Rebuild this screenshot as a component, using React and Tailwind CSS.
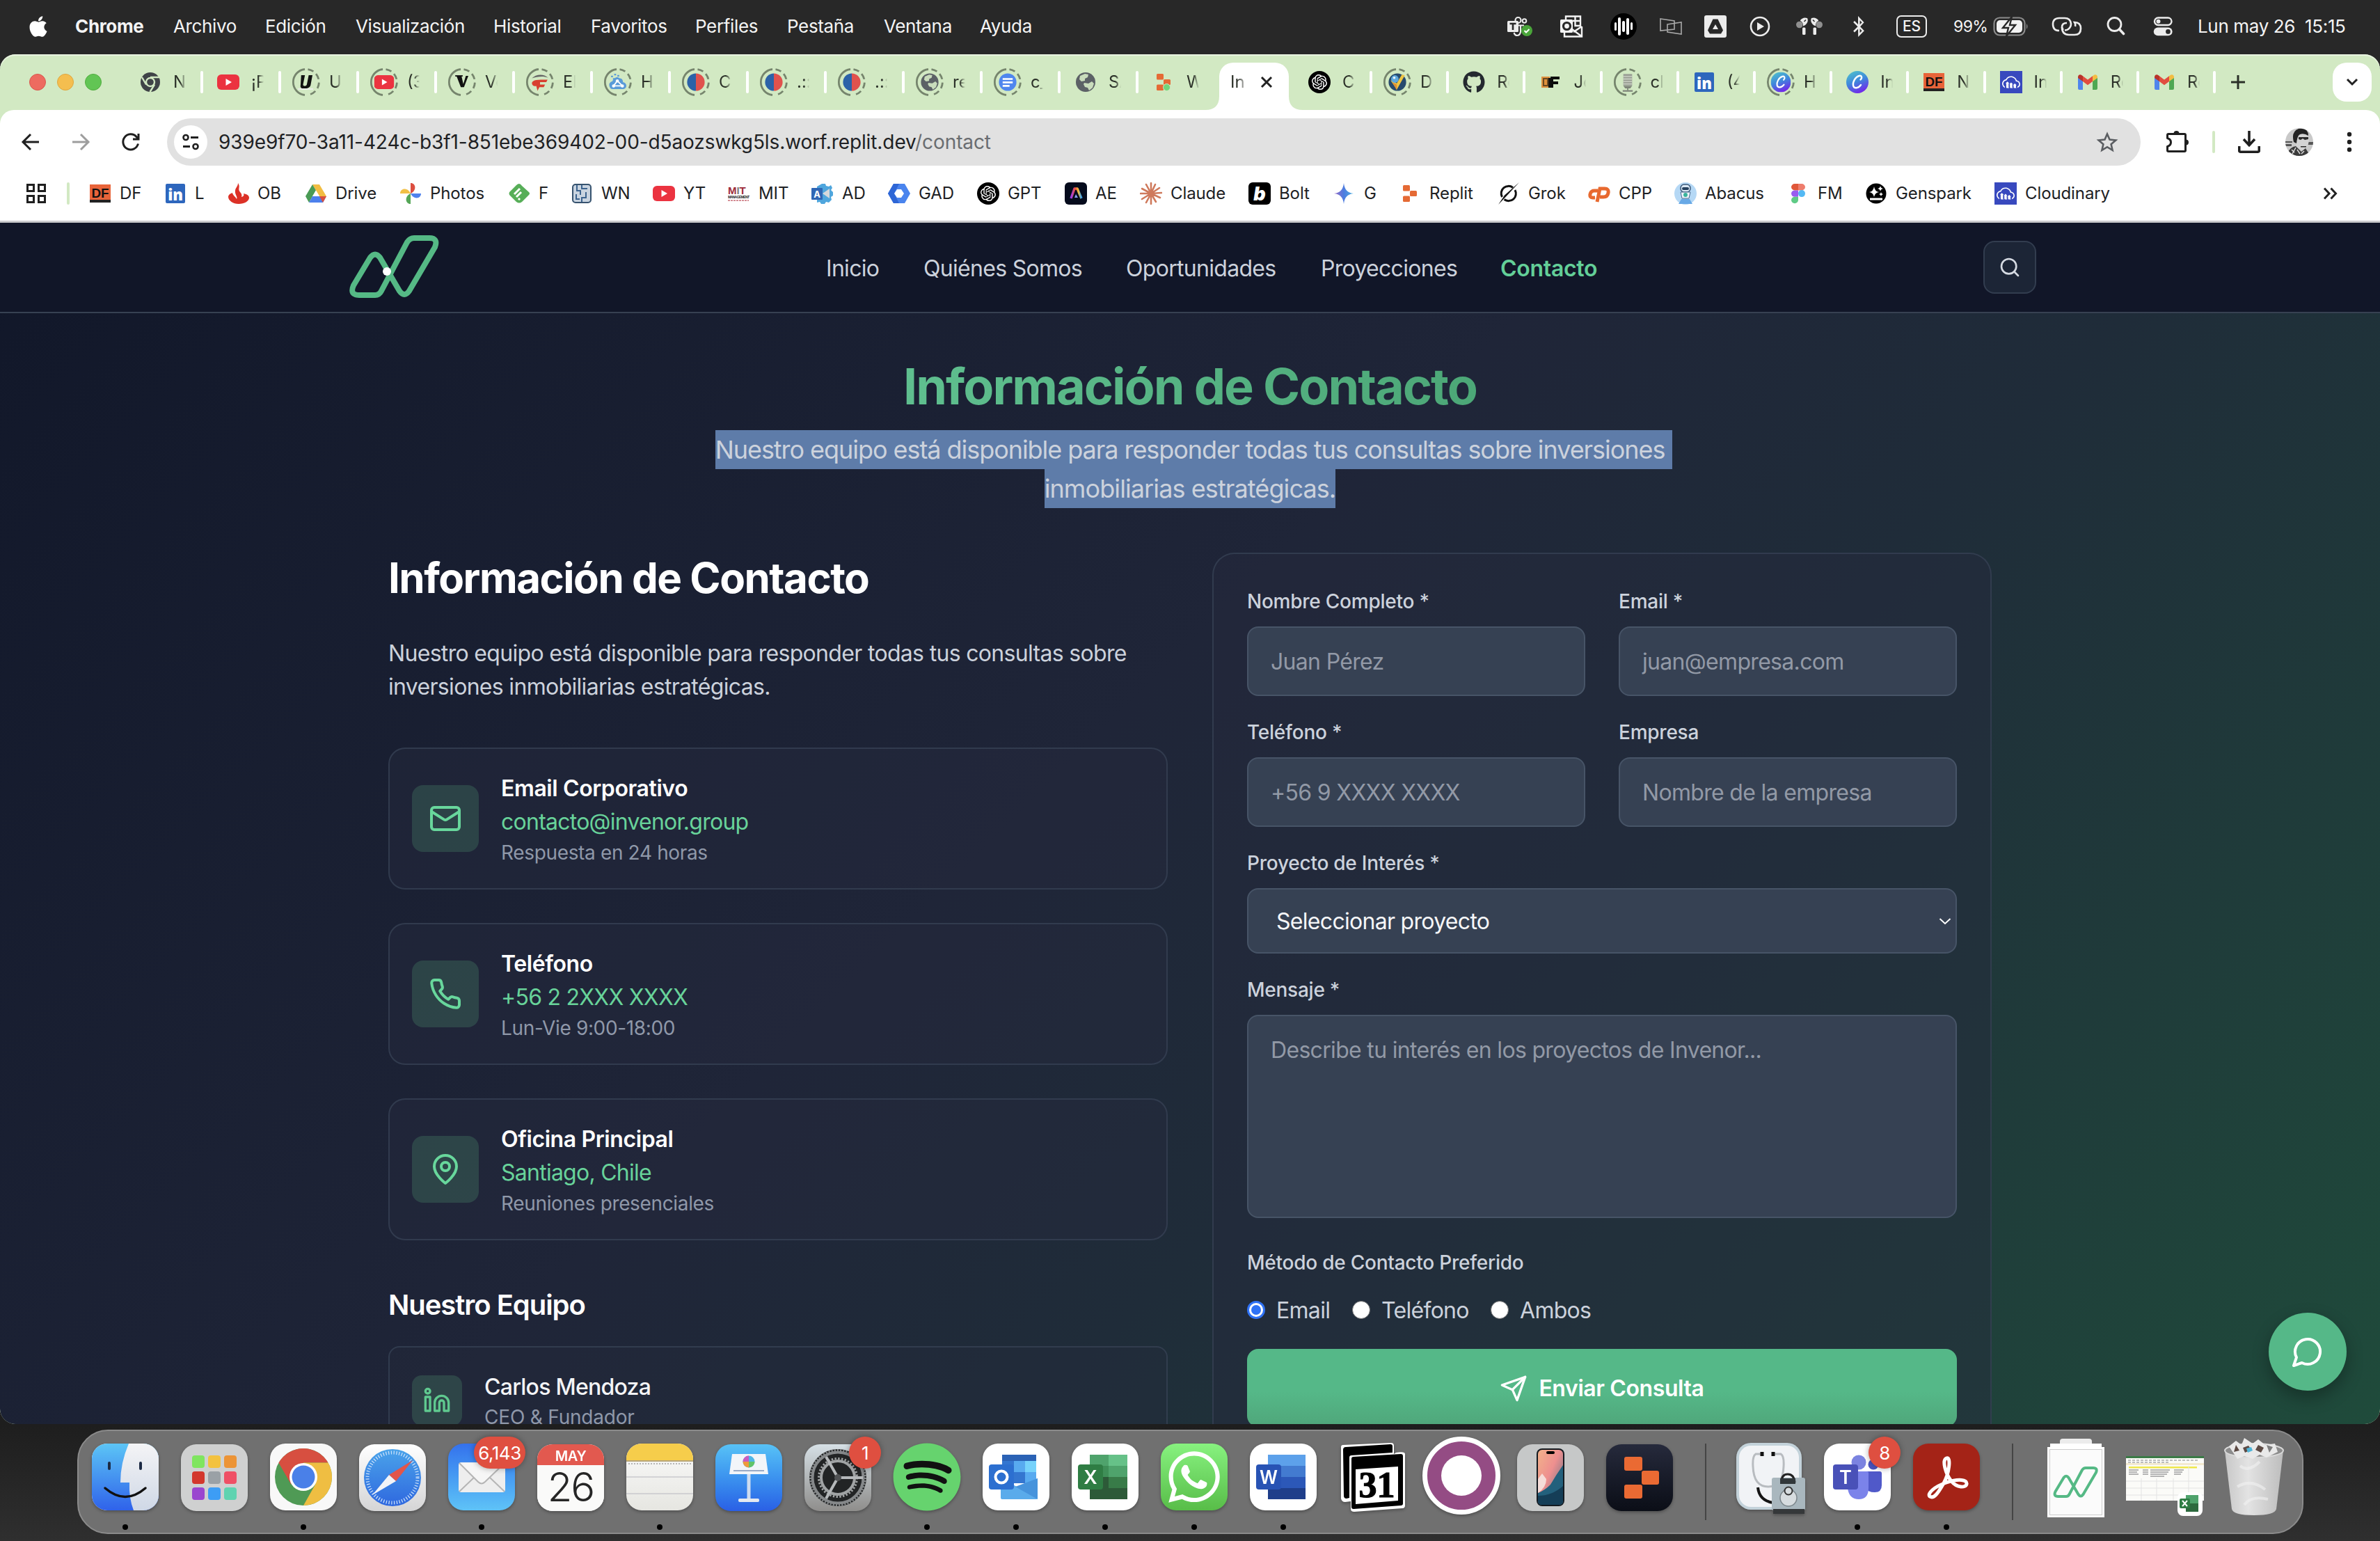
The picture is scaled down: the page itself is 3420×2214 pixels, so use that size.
import React from 'react';
import { FaApple, FaGithub, FaSpotify, FaWhatsapp, FaBluetoothB } from 'react-icons/fa';
import { SiOpenai, SiCloudinary } from 'react-icons/si';

/* ---------- shared drawings ---------- */

const Stroke = ({ className, width = 2, children }) => (
  <svg viewBox="0 0 24 24" fill="none" stroke="currentColor" strokeWidth={width} strokeLinecap="round" strokeLinejoin="round" className={className}>
    {children}
  </svg>
);

const Logo = ({ className, dot = true, width = 8 }) => (
  <svg viewBox="0 0 130 92" className={className} fill="none">
    <path
      d="M14 86H37Q43 86 46 80L83 10Q87 4 93 4H115Q128 4 123 17L86 80Q79 90 72 80L44 32Q37 23 30 32L6 72Q0 86 14 86Z"
      stroke="#55b985"
      strokeWidth={width}
      strokeLinejoin="round"
    />
    {dot && <circle cx="54" cy="52" r="6" fill="#fff" />}
  </svg>
);

const S = ({ children, className = 'size-8', vb = '0 0 32 32' }) => (
  <svg viewBox={vb} className={`${className} block shrink-0`}>
    {children}
  </svg>
);

const YT = () => (
  <S>
    <rect x="0" y="5" width="32" height="22" rx="6" fill="#eb3340" />
    <path d="M12.5 11l8.5 5-8.5 5z" fill="#fff" />
  </S>
);
const DF = () => (
  <S>
    <rect x="1" y="3" width="30" height="26" fill="#e8643a" />
    <rect x="1" y="25" width="30" height="4" fill="#222" />
    <text x="16" y="21.5" textAnchor="middle" fontFamily="Liberation Sans" fontSize="19" textLength="25" lengthAdjust="spacingAndGlyphs" fontWeight="bold" fill="#111">DF</text>
  </S>
);
const LI = () => (
  <S>
    <rect x="2" y="2" width="28" height="28" rx="2" fill="#2d66bd" />
    <text x="16" y="26" textAnchor="middle" fontFamily="Open Sans" fontWeight="800" fontSize="22" fill="#fff">in</text>
  </S>
);
const Gpt = () => (
  <div className="flex size-8 shrink-0 items-center justify-center rounded-full bg-black">
    <SiOpenai className="size-[22px] text-white" />
  </div>
);
const ChromeMono = () => (
  <S>
    <circle cx="16" cy="16" r="14" fill="#3f4347" />
    <path d="M16 9H29M10 19.5L4 9M22 19.5L15.5 30" stroke="#d2e9c3" strokeWidth="2.4" />
    <circle cx="16" cy="16" r="6" fill="#3f4347" stroke="#d2e9c3" strokeWidth="2.4" />
  </S>
);
const Globe = () => (
  <S>
    <circle cx="16" cy="16" r="14" fill="#5c6166" />
    <path d="M15 4l5 1-1 4-4 2v3l-5 1-3-3 1-5zM14 17l6 1 5-3 3 3-2 6-5 4-2-4-4-1-2-4z" fill="#c9dcbc" />
  </S>
);
const Flag = () => (
  <S>
    <path d="M16 2a14 14 0 0 0 0 28z" fill="#2c62a8" />
    <path d="M16 2a14 14 0 0 1 0 28z" fill="#e0524d" />
  </S>
);
const Replit = ({ green }) => (
  <S>
    <rect x="6" y="4" width="10" height="8.5" rx="1.5" fill="#e56a35" />
    <rect x="16" y="12" width="10" height="8" rx="1.5" fill="#e56a35" />
    <rect x="6" y="19.5" width="10" height="8.5" rx="1.5" fill="#e56a35" />
    {green && <circle cx="20.5" cy="23.5" r="5" fill="#72d67c" stroke="#d2e9c3" strokeWidth="1" />}
  </S>
);
const Canva = () => (
  <S>
    <defs>
      <linearGradient id="canva" x1="0.2" y1="0" x2="0.6" y2="1">
        <stop offset="0" stopColor="#4fc0cc" />
        <stop offset="0.5" stopColor="#3f86dc" />
        <stop offset="1" stopColor="#7324ea" />
      </linearGradient>
    </defs>
    <circle cx="16" cy="16" r="16" fill="url(#canva)" />
    <path d="M20.500 12.500c3-3 1.500-6.500-2-5.500-5.500 1.500-9.500 9-8.500 14 1 4.500 7 4.500 11-1" fill="none" stroke="#fff" strokeWidth="2.400" strokeLinecap="round" />
  </S>
);
const Cloudinary = () => (
  <div className="flex size-8 shrink-0 items-center justify-center bg-[#3849be]">
    <SiCloudinary className="size-[26px] text-white" />
  </div>
);
const Gmail = () => (
  <S>
    <path d="M2 9v16a2 2 0 0 0 2 2h5V14z" fill="#4f85ed" />
    <path d="M30 9v16a2 2 0 0 1-2 2h-5V14z" fill="#4fa853" />
    <path d="M2 9c0-4 3.500-4.500 6-2.500l1 .8V15l-7-5z" fill="#b8332a" />
    <path d="M30 9c0-4-3.500-4.500-6-2.500l-1 .8V15l7-5z" fill="#f2bd42" />
    <path d="M9 7.300l7 5.200 7-5.200V15l-7 5.300L9 15z" fill="#e14d3f" />
  </S>
);

const tabIcons = {
  chrome: <ChromeMono />,
  yt: <YT />,
  u: (
    <S>
      <path d="M8 5h6l-3 15c0 3 5 3 6 0l3-15h6l-3 16c-2 7-18 8-16 0z" fill="#111" />
      <path d="M3 27h24" stroke="#eee" strokeWidth="2" />
    </S>
  ),
  v: (
    <S>
      <path d="M7 6h8l3 13 4-13h4l-7 18h-5z" fill="#111" />
      <path d="M5 6h12" stroke="#111" strokeWidth="2" />
    </S>
  ),
  el: (
    <S>
      <path d="M3 10C9 3 22 2 29 9 22 6 11 7 3 10z" fill="#666" />
      <path d="M3 17c2-5 8-5 25-5l-2 4H16v4h8l-2 4h-7l-3 6-2-8c-4 1-7-1-7-5z" fill="#d8402f" />
    </S>
  ),
  h: (
    <S>
      <path d="M3 24c-3-6 2-9 4-9 2-6 8-9 12-5 4 0 5 4 5 6 7 1 7 10 1 11H7c-2 0-3-1-4-3z" fill="#5a9bd8" />
      <path d="M9 22l6-8 8 8z" fill="none" stroke="#fff" strokeWidth="2" />
      <circle cx="9" cy="22" r="2.500" fill="#fff" />
      <circle cx="23" cy="22" r="2.500" fill="#fff" />
      <circle cx="15" cy="14" r="2.500" fill="#fff" />
      <path d="M5 7h3M10 4h3M8 11h3M15 6h3" stroke="#5a9bd8" strokeWidth="2.500" />
    </S>
  ),
  flag: <Flag />,
  globe: <Globe />,
  doc: (
    <S>
      <circle cx="16" cy="16" r="14" fill="#4f86ee" />
      <path d="M8 11h16M8 16.500h16M8 22h11" stroke="#fff" strokeWidth="3" />
    </S>
  ),
  replit: <Replit green />,
  gpt: <Gpt />,
  d: (
    <S>
      <circle cx="16" cy="16" r="14" fill="#264a6e" />
      <path d="M5 13l10 15L28 5l-5-1-8 14z" fill="#eec544" />
      <path d="M8 16l7 13V20z" fill="#df8e36" />
      <circle cx="12" cy="11" r="6" fill="#5fa8dc" />
      <circle cx="11" cy="9" r="2" fill="#e8f4fc" />
    </S>
  ),
  github: <FaGithub className="size-8 text-[#24292f]" />,
  f: (
    <S>
      <rect x="3" y="8" width="12" height="16" fill="#e0913d" />
      <rect x="6" y="11" width="6" height="10" fill="#e0913d" stroke="#6b4a22" strokeWidth="2" />
      <path d="M18 24V10h11M18 17h9" fill="none" stroke="#0c0c0c" strokeWidth="4" />
      <rect x="13" y="10" width="3" height="14" fill="#111" />
    </S>
  ),
  mic: (
    <S>
      <rect x="9" y="3" width="14" height="19" fill="#9a9f95" />
      <path d="M9 7h14M9 11h14M9 15h14M9 19h14" stroke="#d2d8cc" strokeWidth="1.400" />
      <path d="M9 22h14l-3 4h-8zM15 26h2v3h-2z" fill="#7f857a" />
      <path d="M8 30h16" stroke="#7f857a" strokeWidth="2.400" />
    </S>
  ),
  li: <LI />,
  canva: <Canva />,
  df: <DF />,
  cloud: <Cloudinary />,
  gmail: <Gmail />,
};

const leftTabs = [
  ['chrome', 'N', 0], ['yt', '¡P', 0], ['u', 'U', 1], ['yt', '(3', 1], ['v', 'Vc', 1], ['el', 'El', 1], ['h', 'H', 1],
  ['flag', 'Cl', 1], ['flag', '.::', 1], ['flag', '.::', 1], ['globe', 're', 1], ['doc', 'c_', 1], ['globe', 'SA', 0], ['replit', 'W', 0],
];
const rightTabs = [
  ['gpt', 'Cl', 0], ['d', 'D', 1], ['github', 'Re', 0], ['f', 'Jo', 0], ['mic', 'cl', 1], ['li', '(4', 0], ['canva', 'H', 1],
  ['canva', 'In', 0], ['df', 'N', 0], ['cloud', 'In', 0], ['gmail', 'Re', 0], ['gmail', 'Re', 0],
];

const Tab = ({ icon, label, ring, first, wide }) => (
  <div className={`flex h-8 shrink-0 items-center ${wide ? 'w-[112px]' : 'w-[110.200px]'}`}>
    <span className={`-ml-[2px] h-8 w-1 shrink-0 rounded-sm ${first ? '' : 'bg-white'}`} />
    <span className="relative ml-[14px] flex size-11 shrink-0 items-center justify-center">
      {icon && <span className={ring ? 'scale-[0.9]' : ''}>{tabIcons[icon]}</span>}
      {ring ? (
        <svg viewBox="0 0 44 44" className="absolute inset-0 size-11" fill="none" stroke="#76856d" strokeWidth="2.800">
          <path d="M20 3.500A18.600 18.600 0 0 0 20 40.500" />
          <path d="M24.500 3.600A18.600 18.600 0 0 1 24.500 40.400" strokeDasharray="8.500 5" />
        </svg>
      ) : null}
    </span>
    <span className="ml-[11px] w-[18px] whitespace-nowrap text-[24px] leading-8 text-[#2b3028] [mask-image:linear-gradient(90deg,#000_55%,transparent)]">
      {label}
    </span>
  </div>
);

/* ---------- bookmarks ---------- */

const bookmarks = [
  ['DF', 'w-[108px]', <DF />],
  ['L', 'w-[90px]', <LI />],
  ['OB', 'w-[112px]', (
    <S>
      <path d="M2 21c0-3 3-5 6-6 0 3 4 5 6 9 2-3-3-7-2-12C12 8 16 6 16 1c4 6-1 8 3 13 2 2 3 4 2 7 5-1 3-5 3-5 5 1 8 3 8 6 0 5-7 9-15 9S2 26 2 21z" fill="#dc3127" />
    </S>
  )],
  ['Drive', 'w-[136px]', (
    <S>
      <path d="M11 3h10l10 17H21z" fill="#f2bd42" />
      <path d="M11 3l5 8.500L6 29 1 20z" fill="#4a9b55" />
      <path d="M11 20h20l-5 9H6z" fill="#4c80ec" />
      <path d="M21 20h10l-5 9z" fill="#d9503f" />
      <path d="M16 11.500L21 20H11z" fill="#fff" />
    </S>
  )],
  ['Photos', 'w-[156px]', (
    <S>
      <path d="M16 1c8 0 9 11 0 15z" fill="#dc4e40" />
      <path d="M31 16c0 8-11 9-15 0z" fill="#4f82ee" />
      <path d="M16 31c-8 0-9-11 0-15z" fill="#55a657" />
      <path d="M1 16c0-8 11-9 15 0z" fill="#f1c046" />
    </S>
  )],
  ['F', 'w-[90px]', (
    <S>
      <path d="M16 2q2 0 4 3l10 9q2 2 0 4L20 28q-4 3-8 0L2 18q-1-2 0-4L12 4q2-2 4-2z" fill="#57ae58" />
      <path d="M9 17l8-8M12 21l7-7M15 25l2-2" stroke="#fff" strokeWidth="3" />
    </S>
  )],
  ['WN', 'w-[118px]', (
    <S>
      <rect x="3" y="3" width="26" height="26" rx="4" fill="#c9d4e0" stroke="#37536f" strokeWidth="2" />
      <path d="M9 4v8h5v6M16 4v5h8M22 14v8h-6v6M8 17v7h5" fill="none" stroke="#3d648f" strokeWidth="2" />
    </S>
  )],
  ['YT', 'w-[108px]', <YT />],
  ['MIT', 'w-[120px]', (
    <S>
      <text x="0" y="17" fontFamily="Liberation Sans" fontWeight="bold" fontSize="15" fill="#9d2c3a">M<tspan fill="#7d7d7d">I</tspan>T</text>
      <text x="0" y="23" fontFamily="Liberation Sans" fontWeight="bold" fontSize="5" textLength="31" fill="#222">MANAGEMENT</text>
      <path d="M0 26h30" stroke="#c76b74" strokeWidth="1.500" strokeDasharray="3 1" />
    </S>
  )],
  ['AD', 'w-[110px]', (
    <S>
      <path d="M15 2h5l1 3 4 1 3-2 2 4-2 3 3 3v5l-3 2 1 4-4 4-4-1-2 3h-5l-2-3-4 1V6z" fill="#4fa6dd" />
      <path d="M16 16l10-7v14z" fill="#d5d8dc" />
      <rect x="0" y="8" width="16" height="17" rx="1" fill="#2f66b5" />
      <text x="8" y="21.500" textAnchor="middle" fontFamily="Inter" fontWeight="bold" fontSize="13" fill="#fff">A</text>
    </S>
  )],
  ['GAD', 'w-[128px]', (
    <S>
      <path d="M8 2h16l8 14-8 14H8L0 16z" fill="#4a84ee" />
      <path d="M8 2h8L9 16l7 14H8L0 16z" fill="#2e66d6" />
      <path d="M13 10h6l4 6-4 6h-6l-4-6z" fill="#fff" />
    </S>
  )],
  ['GPT', 'w-[126px]', <Gpt />],
  ['AE', 'w-[108px]', (
    <S>
      <defs>
        <linearGradient id="ae" x1="0" x2="1"><stop offset="0" stopColor="#9a3df0" /><stop offset=".4" stopColor="#f0503c" /><stop offset=".7" stopColor="#f2c23a" /><stop offset="1" stopColor="#3aa0f0" /></linearGradient>
      </defs>
      <rect width="32" height="32" rx="6" fill="#050b1c" />
      <path d="M9 23l5-14h4l6 14" fill="none" stroke="url(#ae)" strokeWidth="3.500" strokeLinejoin="round" />
      <path d="M14 22l2-5 3 5z" fill="#8aa0f5" />
    </S>
  )],
  ['Claude', 'w-[156px]', (
    <S>
      <path d="M16 16L16 1M16 16L22 3M16 16L28 8M16 16L31 15M16 16L29 22M16 16L23 28M16 16L16 31M16 16L9 29M16 16L3 24M16 16L1 16M16 16L3 9M16 16L9 3" stroke="#cf7a5c" strokeWidth="2.600" strokeLinecap="round" />
    </S>
  )],
  ['Bolt', 'w-[122px]', (
    <S>
      <rect width="32" height="32" rx="6" fill="#000" />
      <text x="16" y="26" textAnchor="middle" fontFamily="Inter" fontStyle="italic" fontWeight="900" fontSize="27" fill="#fff">b</text>
    </S>
  )],
  ['G', 'w-[94px]', (
    <S>
      <defs>
        <linearGradient id="gem" x1="0" x2="1"><stop offset="0" stopColor="#9a6cc4" /><stop offset=".5" stopColor="#4d7ce0" /><stop offset="1" stopColor="#4fb0e0" /></linearGradient>
      </defs>
      <path d="M15 1c1 9 5 14 14 15-9 1-13 6-14 15-1-9-5-14-14-15 9-1 13-6 14-15z" fill="url(#gem)" />
    </S>
  )],
  ['Replit', 'w-[142px]', <Replit />],
  ['Grok', 'w-[130px]', (
    <S>
      <path d="M22 7.500A10.500 10.500 0 0 0 6.500 21M9.500 24.500A10.500 10.500 0 0 0 25 11" fill="none" stroke="#111" strokeWidth="3" />
      <path d="M31 0L13 19.500 1 32l9-13.500z" fill="#111" />
    </S>
  )],
  ['CPP', 'w-[124px]', (
    <S>
      <path d="M14 12H9q-5 0-6 5t4 5h3" fill="none" stroke="#e8692f" strokeWidth="5" />
      <path d="M13 28l4-19h7q6 0 5 6t-7 6h-5" fill="none" stroke="#e8692f" strokeWidth="5" />
    </S>
  )],
  ['Abacus', 'w-[162px]', (
    <S>
      <circle cx="16" cy="16" r="16" fill="#b5d8f5" />
      <rect x="9" y="3" width="14" height="11" rx="5" fill="#dbe8f5" stroke="#3c5878" strokeWidth="1.500" />
      <rect x="11" y="7" width="10" height="4" rx="2" fill="#27415f" />
      <path d="M9 14h14l-2 9H11z" fill="#eef4fa" stroke="#4a6a8e" />
      <circle cx="16" cy="18" r="3" fill="#39b39b" />
      <path d="M6 31l4-7h12l4 7z" fill="#68a9e6" />
    </S>
  )],
  ['FM', 'w-[112px]', (
    <S>
      <path d="M16 2h-5a5 4.700 0 0 0 0 9.400h5z" fill="#e0573a" />
      <path d="M16 2h5a5 4.700 0 0 1 0 9.400h-5z" fill="#ee7d6d" />
      <path d="M16 11.400h-5a5 4.700 0 0 0 0 9.400h5z" fill="#9a5cf0" />
      <circle cx="21" cy="16.100" r="5" fill="#54b9f4" />
      <path d="M16 20.800h-5a5 4.700 0 1 0 5 4.700z" fill="#5fcb86" />
    </S>
  )],
  ['Genspark', 'w-[186px]', (
    <S>
      <circle cx="16" cy="16" r="14.500" fill="#000" />
      <path d="M13 6q1 7 7 8-6 1-7 7-1-6-7-7 6-1 7-8zM22 5q.5 3.500 4 4-3.500.5-4 4-.5-3.500-4-4 3.500-.5 4-4zM23 14q.4 2.600 3 3-2.600.4-3 3-.4-2.600-3-3 2.600-.4 3-3z" fill="#fff" />
      <path d="M7 24h18" stroke="#fff" strokeWidth="3" />
    </S>
  )],
  ['Cloudinary', 'w-[190px]', <Cloudinary />],
];

/* ---------- menu bar ---------- */

const MenuBar = () => (
  <div className="flex h-[78px] shrink-0 items-center bg-[#282828] pb-[3px] text-[26px] leading-8 text-[#f4f4f4]">
    <FaApple className="ml-[38px] size-[34px] shrink-0 text-white" />
    <div className="ml-[36px] flex items-center whitespace-nowrap tracking-[-0.35px]">
      <span className="w-[141px] font-bold">Chrome</span>
      <span className="w-[132px]">Archivo</span>
      <span className="w-[130px]">Edición</span>
      <span className="w-[198px]">Visualización</span>
      <span className="w-[140px]">Historial</span>
      <span className="w-[150px]">Favoritos</span>
      <span className="w-[132px]">Perfiles</span>
      <span className="w-[139px]">Pestaña</span>
      <span className="w-[138px]">Ventana</span>
      <span>Ayuda</span>
    </div>
    <div className="ml-auto flex items-center pr-[34px]">
      <S className="h-9 w-9" vb="0 0 36 36">
        <circle cx="15.500" cy="9" r="4" fill="none" stroke="#ececec" strokeWidth="2.200" />
        <circle cx="24.500" cy="10" r="2.800" fill="none" stroke="#ececec" strokeWidth="2" />
        <path d="M16 16.500h8M19 17v9q-1 5-5 5-3 0-4.500-4" fill="none" stroke="#ececec" strokeWidth="2.200" />
        <rect x="0" y="10" width="16" height="16" rx="1.500" fill="#ececec" />
        <path d="M3.500 14h9M8 13.500v9.500" stroke="#282828" strokeWidth="2.600" />
        <circle cx="28" cy="24" r="8" fill="#4aa53a" />
        <path d="M24.500 24l2.500 2.500 4.500-4.500" fill="none" stroke="#fff" strokeWidth="2" />
      </S>
      <S className="ml-[39px] h-9 w-9" vb="0 0 36 36">
        <path d="M9 8V3.500h21v13M7 27v5.500h25V18M19 10h11M22.500 4v13H31M18 22l13.500 10M32 18l-12 8" fill="none" stroke="#f4f4f4" strokeWidth="2.400" />
        <rect x="1" y="8" width="18" height="19" rx="1.500" fill="#f4f4f4" />
        <circle cx="10.500" cy="17.500" r="5" fill="none" stroke="#282828" strokeWidth="3.200" />
      </S>
      <div className="ml-[37px] flex size-[38px] items-center justify-center gap-[2.500px] rounded-full bg-black">
        <i className="h-[12px] w-[3.400px] rounded bg-white" />
        <i className="h-[26px] w-[3.400px] rounded bg-white" />
        <i className="h-[16px] w-[3.400px] rounded bg-white" />
        <i className="h-[24px] w-[3.400px] rounded bg-white" />
        <i className="h-[11px] w-[3.400px] rounded bg-white" />
      </div>
      <S className="ml-[33px] size-8">
        <path d="M1 5l20 3v12L1 22zM11 13l20-3v17l-20-3z" fill="none" stroke="#a9a9a9" strokeWidth="1.600" />
      </S>
      <S className="ml-[32px] size-8">
        <rect width="32" height="32" rx="3" fill="#ececec" />
        <path d="M12.500 5.500h7L27 21.500l-3 5H8l-3-5z" fill="#282828" />
        <path d="M16 13l4 7h-8z" fill="#ececec" />
      </S>
      <S className="ml-[32px] size-8">
        <circle cx="16" cy="16" r="13" fill="none" stroke="#ececec" strokeWidth="2.600" />
        <path d="M12 10l10 6-10 6z" fill="#ececec" />
      </S>
      <S className="ml-[36px] h-8 w-[38px]" vb="0 0 38 32">
        <circle cx="4.800" cy="13.500" r="4.800" fill="#8f8f8f" />
        <circle cx="33.200" cy="13.500" r="4.800" fill="#8f8f8f" />
        <path d="M6 7Q10 2 16 4q2 4-1 8-2 3-5 3.500V13Q9 9 6 8zM32 7q-4-5-10-3-2 4 1 8 2 3 5 3.500V13q1-4 4-5z" fill="#ececec" />
        <rect x="9" y="17.500" width="4.500" height="10.500" rx="1.500" fill="#ececec" />
        <rect x="24.500" y="17.500" width="4.500" height="10.500" rx="1.500" fill="#ececec" />
        <path d="M11.500 9l2.500-2.500M26.500 9L24 6.500" stroke="#282828" strokeWidth="1.600" />
      </S>
      <FaBluetoothB className="ml-[37px] size-[30px] text-[#ececec]" />
      <span className="ml-[39px] flex h-8 w-11 items-center justify-center rounded-[7px] border-2 border-[#ececec] text-[21px] font-medium">ES</span>
      <span className="ml-[38px] w-[50px] text-[23px] tracking-[-0.6px]">99%</span>
      <S className="ml-[7px] h-8 w-[52px]" vb="0 0 52 32">
        <rect x="1.500" y="3.500" width="44" height="25" rx="8" fill="none" stroke="#8a8a8a" strokeWidth="2.200" />
        <rect x="5" y="7" width="37" height="18" rx="5" fill="#f2f2f2" />
        <path d="M27 2L14 18h8l-3 12 13-16h-8z" fill="#f2f2f2" stroke="#282828" strokeWidth="2.400" />
        <path d="M48 12q3 4 0 8z" fill="#8a8a8a" />
      </S>
      <S className="ml-[32px] h-8 w-[44px]" vb="0 0 44 32">
        <path d="M17 21q-2-2-2-4 0-6 7-6M11 22Q2 22 2 13T11 4h8q8 0 9 8 0 5-4 8-2 1.500-5 1.500" fill="none" stroke="#ececec" strokeWidth="2.600" />
        <path d="M15 17q0 11 10 11h8q9 0 9-9t-9-9q2 3 1 6" fill="none" stroke="#ececec" strokeWidth="2.600" />
      </S>
      <S className="ml-[34px] h-8 w-[30px]" vb="0 0 30 32">
        <circle cx="12.500" cy="13" r="9.500" fill="none" stroke="#ececec" strokeWidth="2.800" />
        <path d="M19.500 20l6 6.500" stroke="#ececec" strokeWidth="3.600" strokeLinecap="round" />
      </S>
      <S className="ml-[37px] h-8 w-[30px]" vb="0 0 30 32">
        <rect x="3" y="3.500" width="24.500" height="10.500" rx="5.250" fill="none" stroke="#ececec" strokeWidth="2.400" />
        <circle cx="8.500" cy="8.700" r="3" fill="#ececec" />
        <rect x="1.800" y="17.500" width="26.800" height="11.800" rx="5.900" fill="#ececec" />
        <circle cx="22.500" cy="23.400" r="3.400" fill="#282828" />
      </S>
      <span className="ml-[35px] w-[228px] whitespace-pre tracking-[-0.35px]">Lun may 26  15:15</span>
    </div>
  </div>
);

/* ---------- browser chrome ---------- */

const TabStrip = () => (
  <div className="flex h-[80px] shrink-0 items-center">
    <span className="ml-[42px] size-6 shrink-0 rounded-full border border-[#d9574d] bg-[#ed6b60]" />
    <span className="ml-4 size-6 shrink-0 rounded-full border border-[#dfa63e] bg-[#f4be4f]" />
    <span className="ml-4 size-6 shrink-0 rounded-full border border-[#52ae40] bg-[#62c554]" />
    <div className="ml-8 flex items-center">
      {leftTabs.map(([icon, label, ring], i) => (
        <Tab key={i} icon={icon} label={label} ring={ring} first={i === 0} wide />
      ))}
    </div>
    <div className="flex w-[112px] shrink-0 items-end self-end">
      <S className="-ml-[14px] size-5" vb="0 0 20 20">
        <path d="M20 0v20H0Q20 20 20 0z" fill="#fff" />
      </S>
      <div className="flex h-[68px] w-[100px] shrink-0 items-center rounded-t-[20px] bg-white pb-3">
        <span className="ml-4 w-6 text-[24px] leading-8 text-[#2b3028] [mask-image:linear-gradient(90deg,#000_40%,rgba(0,0,0,0.4)_80%)]">In</span>
        <S className="ml-[18px] size-5" vb="0 0 20 20">
          <path d="M3 3l14 14M17 3L3 17" stroke="#222" strokeWidth="3" />
        </S>
      </div>
      <S className="size-5" vb="0 0 20 20">
        <path d="M0 0v20h20Q0 20 0 0z" fill="#fff" />
      </S>
    </div>
    <div className="flex items-center">
      {rightTabs.map(([icon, label, ring], i) => (
        <Tab key={i} icon={icon} label={label} ring={ring} first={i === 0} wide={i < 1} />
      ))}
      <span className="-ml-[2px] h-8 w-1 rounded-sm bg-white" />
    </div>
    <S className="ml-[22px] size-5" vb="0 0 20 20">
      <path d="M10 0v20M0 10h20" stroke="#2b3028" strokeWidth="3" />
    </S>
    <div className="mr-3 ml-auto flex size-14 items-center justify-center rounded-[20px] bg-white">
      <S className="h-3 w-[18px]" vb="0 0 18 12">
        <path d="M2 2l7 7 7-7" fill="none" stroke="#222" strokeWidth="3" />
      </S>
    </div>
  </div>
);

const Toolbar = () => (
  <div className="flex h-[92px] shrink-0 items-center">
    <S className="ml-[30px] size-7" vb="0 0 28 28">
      <path d="M26 14H4M14 3L3 14l11 11" fill="none" stroke="#1f1f1f" strokeWidth="3" />
    </S>
    <S className="ml-[44px] size-7" vb="0 0 28 28">
      <path d="M2 14h22M14 3l11 11-11 11" fill="none" stroke="#9d9d9d" strokeWidth="3" />
    </S>
    <S className="ml-[44px] size-7" vb="0 0 28 28">
      <path d="M24.500 16.500A11 11 0 1 1 22 6.500L25 9.500M25 2v8h-8" fill="none" stroke="#1f1f1f" strokeWidth="3" />
    </S>
    <div className="ml-[38px] flex h-[68px] w-[2836px] shrink-0 items-center rounded-full bg-[#e1e1e1]">
      <div className="ml-[10px] flex size-12 items-center justify-center rounded-full bg-white">
        <S className="size-7" vb="0 0 28 28">
          <circle cx="7" cy="7.500" r="3.500" fill="none" stroke="#1f1f1f" strokeWidth="2.600" />
          <path d="M14 7.500h11M3 20.500h10" stroke="#1f1f1f" strokeWidth="3" />
          <circle cx="21" cy="20.500" r="3.500" fill="none" stroke="#1f1f1f" strokeWidth="2.600" />
        </S>
      </div>
      <div className="ml-4 text-[28px] leading-9 tracking-[-0.1px] whitespace-nowrap text-[#202124]">
        939e9f70-3a11-424c-b3f1-851ebe369402-00-d5aozswkg5ls.worf.replit.dev<span className="text-[#6a6d71]">/contact</span>
      </div>
      <S className="mr-[32px] ml-auto size-8">
        <path d="M16 4.500l3.500 8.100 8.800.8-6.700 5.800 2 8.600L16 23.200l-7.600 4.600 2-8.600-6.700-5.800 8.800-.8z" fill="none" stroke="#5b5e62" strokeWidth="2.600" />
      </S>
    </div>
    <S className="ml-[36px] h-8 w-[34px]" vb="0 0 34 32">
      <path d="M4 4.500h23q1.500 0 1.500 1.500v22q0 1.500-1.500 1.500H4q-1.500 0-1.500-1.500v-5.500q5-1.500 5-6t-5-6V6Q2.500 4.500 4 4.500z" fill="none" stroke="#1f1f1f" strokeWidth="3" strokeLinejoin="round" />
      <path d="M11.500 4a4 4 0 0 1 8 0zM29 12.500a4 4 0 0 1 0 8z" fill="#1f1f1f" />
    </S>
    <span className="ml-[33px] h-8 w-1 rounded bg-[#d2e9c3]" />
    <S className="ml-[33px] size-8">
      <path d="M16 0v20M8 12l8 8.500 8-8.500M1.700 22v6.500q0 1.700 1.700 1.700h25.200q1.700 0 1.700-1.700V22" fill="none" stroke="#1f1f1f" strokeWidth="3.600" />
    </S>
    <S className="ml-[36px] size-10" vb="0 0 40 40">
      <defs><clipPath id="ava"><circle cx="20" cy="20" r="20" /></clipPath></defs>
      <g clipPath="url(#ava)">
        <rect width="40" height="40" fill="#c9c9c9" />
        <path d="M0 19h10v2H0zM0 23h9v3H0zM32 20h8v4h-8z" fill="#555" />
        <path d="M14 12Q18 4 28 5q7 3 6 13l-2 9-7 5-9-4z" fill="#d3d3d3" />
        <path d="M12 20Q8 5 19 1q14-2 14 10-6-4-12-2-4 2-5 13z" fill="#232323" />
        <path d="M19 13l14 0v3l-5 1-3-2-3 2-3-1zM22 26h8v1.600h-8z" fill="#2a2a2a" />
        <path d="M3 36q4-9 12-10l8 8 6-5 5 8-8 6H8z" fill="#3b3b3b" />
        <path d="M9 31l4 4M15 28l-5 9M17 31l4 6M27 33l-4 4" stroke="#ddd" strokeWidth="1.500" />
      </g>
    </S>
    <S className="ml-[46px] h-8 w-3" vb="0 0 12 32">
      <circle cx="6" cy="5" r="3.200" fill="#1f1f1f" /><circle cx="6" cy="16" r="3.200" fill="#1f1f1f" /><circle cx="6" cy="27" r="3.200" fill="#1f1f1f" />
    </S>
  </div>
);

const Bookmarks = () => (
  <div className="flex h-[56px] shrink-0 items-center">
    <S className="ml-[38px] size-7" vb="0 0 28 28">
      <path d="M1.500 1.500h9v9h-9zM17.500 1.500h9v9h-9zM1.500 17.500h9v9h-9zM17.500 17.500h9v9h-9z" fill="none" stroke="#1f1f1f" strokeWidth="3" />
    </S>
    <span className="mr-7 ml-[30px] h-8 w-1 shrink-0 rounded bg-[#d2e9c3]" />
    {bookmarks.map(([label, w, icon]) => (
      <div key={label} className={`flex shrink-0 items-center gap-3 text-[24px] leading-8 tracking-[-0.1px] whitespace-nowrap text-[#202124] ${w}`}>
        {icon}
        <span>{label}</span>
      </div>
    ))}
    <S className="mr-[61px] ml-auto h-[18px] w-[22px]" vb="0 0 22 18">
      <path d="M3 1.500l7 7.500-7 7.500M12.500 1.500l7 7.500-7 7.500" fill="none" stroke="#222" strokeWidth="3" />
    </S>
  </div>
);

/* ---------- web page ---------- */

const InfoCard = ({ icon, title, value, note }) => (
  <div className="flex h-[204px] items-center gap-8 rounded-[24px] border-2 border-[#364154]/80 bg-[#262b3d]/45 p-8">
    <div className="flex size-24 items-center justify-center rounded-[16px] bg-[#68d391]/18 text-[#68d79c]">{icon}</div>
    <div className="pt-[2px]">
      <div className="text-[32px] leading-[48px] font-semibold tracking-[-0.4px] text-white">{title}</div>
      <div className="text-[32px] leading-[48px] tracking-[-0.75px] text-[#68d39a]">{value}</div>
      <div className="text-[28px] leading-[40px] tracking-[-0.35px] text-[#8f98a9]">{note}</div>
    </div>
  </div>
);

const Label = ({ children }) => <div className="text-[28px] leading-[40px] font-medium tracking-[-0.24px] text-[#ccd2dc]">{children}</div>;

const Field = ({ label, placeholder }) => (
  <div className="flex flex-1 flex-col gap-4">
    <Label>{label}</Label>
    <div className="flex h-[100px] items-center rounded-[16px] border-2 border-[#475467] bg-[#364153] px-8 pt-[2px] text-[32px] leading-[48px] tracking-[-0.68px] text-[#9299a6]">{placeholder}</div>
  </div>
);

const Radio = ({ label, on, w }) => (
  <div className={`flex items-center ${w}`}>
    <span className={`size-[26px] shrink-0 rounded-full bg-white ${on ? 'border-[3px] border-[#2f72f5] p-[3px]' : 'border border-[#767676]'}`}>
      {on && <span className="block size-full rounded-full bg-[#2f72f5]" />}
    </span>
    <span className="ml-4 pt-[1px] text-[32px] leading-[47px] tracking-[-0.7px] text-[#ccd2dc]">{label}</span>
  </div>
);

const Page = () => (
  <div className="relative flex min-h-0 flex-1 flex-col overflow-hidden rounded-b-[20px] bg-[linear-gradient(135deg,#111729_0%,#1f2538_45%,#1f2c39_62%,#1f4b3b_100%)]">
    <div className="flex h-[130px] shrink-0 items-center border-b-2 border-[#374152] bg-[#111628]">
      <Logo className="ml-[502px] h-[92px] w-[130px] shrink-0" />
      <nav className="ml-[555px] flex items-center pt-[3px] text-[32px] leading-[48px] tracking-[-0.7px] whitespace-nowrap text-[#ccd2dc]">
        <span className="w-[140px]">Inicio</span>
        <span className="w-[291px]">Quiénes Somos</span>
        <span className="w-[280px]">Oportunidades</span>
        <span className="w-[258px]">Proyecciones</span>
        <span className="font-semibold tracking-[-0.3px] text-[#63cf98]">Contacto</span>
      </nav>
      <div className="mr-[494px] ml-auto flex size-[76px] items-center justify-center rounded-[16px] border-2 border-[#323d4f] bg-[#1c2536] text-[#d5dae2]">
        <Stroke className="size-8"><circle cx="11" cy="11" r="8" /><path d="m21 21-4.300-4.300" /></Stroke>
      </div>
    </div>

    <div className="flex shrink-0 flex-col items-center pt-[65px]">
      <h1 className="bg-gradient-to-r from-[#5fbf8f] to-[#4ca777] bg-clip-text text-[72px] leading-[80px] font-bold tracking-[-2px] whitespace-nowrap text-transparent">
        Información de Contacto
      </h1>
      <div className="mt-[23px] flex flex-col items-center text-[36px] leading-[56px] tracking-[-1.050px] whitespace-nowrap text-[#ccd2dc]">
        <span className="-mr-[11px] bg-[#5e7ca9] pr-[11px]">Nuestro equipo está disponible para responder todas tus consultas sobre inversiones</span>
        <span className="bg-[#5e7ca9] tracking-[-0.9px]">inmobiliarias estratégicas.</span>
      </div>
    </div>

    <div className="mx-auto mt-16 flex w-[2304px] shrink-0 items-start gap-16">
      <div className="w-[1120px]">
        <h2 className="text-[60px] leading-[72px] font-bold tracking-[-1.500px] whitespace-nowrap text-white">Información de Contacto</h2>
        <p className="mt-[49px] text-[32px] leading-[48px] tracking-[-0.68px] whitespace-nowrap text-[#ccd2dc]">
          Nuestro equipo está disponible para responder todas tus consultas sobre
          <br />
          inversiones inmobiliarias estratégicas.
        </p>
        <div className="mt-[63px] flex flex-col gap-12">
          <InfoCard
            icon={<Stroke className="size-12"><rect width="20" height="16" x="2" y="4" rx="2" /><path d="m22 7-8.970 5.700a1.940 1.940 0 0 1-2.060 0L2 7" /></Stroke>}
            title="Email Corporativo" value="contacto@invenor.group" note="Respuesta en 24 horas"
          />
          <InfoCard
            icon={<Stroke className="size-12"><path d="M22 16.920v3a2 2 0 0 1-2.180 2 19.790 19.790 0 0 1-8.630-3.070 19.500 19.500 0 0 1-6-6 19.790 19.790 0 0 1-3.070-8.670A2 2 0 0 1 4.110 2h3a2 2 0 0 1 2 1.720 12.840 12.840 0 0 0 .7 2.810 2 2 0 0 1-.45 2.110L8.090 9.910a16 16 0 0 0 6 6l1.270-1.270a2 2 0 0 1 2.110-.45 12.840 12.840 0 0 0 2.810.7A2 2 0 0 1 22 16.920z" /></Stroke>}
            title="Teléfono" value="+56 2 2XXX XXXX" note="Lun-Vie 9:00-18:00"
          />
          <InfoCard
            icon={<Stroke className="size-12"><path d="M20 10c0 6-8 12-8 12s-8-6-8-12a8 8 0 0 1 16 0Z" /><circle cx="12" cy="10" r="3" /></Stroke>}
            title="Oficina Principal" value="Santiago, Chile" note="Reuniones presenciales"
          />
        </div>
        <h3 className="mt-[65px] text-[40px] leading-[56px] font-semibold tracking-[-1.050px] text-white">Nuestro Equipo</h3>
        <div className="mt-[31px] flex items-center gap-8 rounded-[16px] border-2 border-[#364154]/80 bg-[#262b3d]/35 p-8">
          <div className="flex size-[72px] items-center justify-center rounded-[14px] bg-[#68d391]/18 text-[#5fc98f]">
            <Stroke className="size-10"><path d="M16 8a6 6 0 0 1 6 6v7h-4v-7a2 2 0 0 0-2-2 2 2 0 0 0-2 2v7h-4v-7a6 6 0 0 1 6-6z" /><rect width="4" height="12" x="2" y="9" /><circle cx="4" cy="4" r="2" /></Stroke>
          </div>
          <div>
            <div className="pt-[1px] text-[32px] leading-[47px] font-medium tracking-[-0.75px] text-[#f3f4f6]">Carlos Mendoza</div>
            <div className="text-[28px] leading-[40px] tracking-[-0.2px] text-[#8f98a9]">CEO &amp; Fundador</div>
          </div>
        </div>
      </div>

      <div className="flex w-[1120px] flex-col gap-8 rounded-[32px] border-2 border-[#364154]/80 bg-[#262b3d]/45 p-12">
        <div className="flex gap-12">
          <Field label="Nombre Completo *" placeholder="Juan Pérez" />
          <Field label="Email *" placeholder="juan@empresa.com" />
        </div>
        <div className="flex gap-12">
          <Field label="Teléfono *" placeholder="+56 9 XXXX XXXX" />
          <Field label="Empresa" placeholder="Nombre de la empresa" />
        </div>
        <div className="flex flex-col gap-4">
          <Label>Proyecto de Interés *</Label>
          <div className="flex h-[94px] items-center justify-between rounded-[16px] border-2 border-[#475467] bg-[#364153] pt-[2px] pr-[6px] pl-10 text-[32px] leading-[48px] tracking-[-0.7px] text-[#f5f6f8]">
            Seleccionar proyecto
            <S className="h-[10px] w-[18px]" vb="0 0 18 10">
              <path d="M1.500 1L9 8l7.500-7" fill="none" stroke="#fff" strokeWidth="2" />
            </S>
          </div>
        </div>
        <div className="flex flex-col gap-4">
          <Label>Mensaje *</Label>
          <div className="mb-3 h-[292px] rounded-[16px] border-2 border-[#475467] bg-[#364153] px-8 py-[25px] text-[32px] leading-[48px] tracking-[-0.68px] text-[#9299a6]">
            Describe tu interés en los proyectos de Invenor...
          </div>
        </div>
        <div className="flex flex-col gap-6">
          <Label>Método de Contacto Preferido</Label>
          <div className="flex items-center">
            <Radio label="Email" on w="w-[151px]" />
            <Radio label="Teléfono" w="w-[199px]" />
            <Radio label="Ambos" w="w-[160px]" />
          </div>
        </div>
        <div className="flex h-[112px] items-center justify-center gap-4 rounded-[16px] bg-[linear-gradient(180deg,#55b888_55%,#4fa67a)] pt-[2px] text-[32px] leading-[48px] font-semibold tracking-[-0.4px] text-white">
          <Stroke className="size-10"><path d="m22 2-7 20-4-9-9-4Z" /><path d="M22 2 11 13" /></Stroke>
          Enviar Consulta
        </div>
      </div>
    </div>

    <div className="absolute right-12 bottom-12 flex size-28 items-center justify-center rounded-full bg-[#55b888] text-white shadow-[0_10px_24px_rgba(0,0,0,0.3)]">
      <Stroke className="size-12"><path d="M7.900 20A9 9 0 1 0 4 16.100L2 22Z" /></Stroke>
    </div>
  </div>
);

/* ---------- dock ---------- */

const D = ({ children, badge, badgeWide, dot, w = 'w-24', mr = 'mr-8' }) => (
  <div className={`relative flex h-[142px] shrink-0 flex-col items-center ${w} ${mr}`}>
    <div className="mt-[17px] flex h-[100px] w-full items-center justify-center drop-shadow-[0_2px_2px_rgba(0,0,0,0.3)]">{children}</div>
    {dot && <span className="mt-[19px] size-2 shrink-0 rounded-full bg-black" />}
    {badge && (
      <span className={`absolute top-[8px] flex h-[46px] items-center justify-center rounded-full bg-[#df4f40] text-[26px] tracking-[-0.5px] text-white shadow-[0_0_8px_rgba(0,0,0,0.35)] ${badgeWide ? '-right-[15px] w-[74px]' : '-right-[14px] w-[46px]'}`}>
        {badge}
      </span>
    )}
  </div>
);

const Tile = ({ className = 'bg-white', children }) => (
  <div className={`size-24 shrink-0 overflow-hidden rounded-[22px] ${className}`}>{children}</div>
);
const T = ({ children }) => <svg viewBox="0 0 96 96" className="block size-24">{children}</svg>;

const launch = ['#7fe55f', '#f3c23f', '#ec9436', '#d3372c', '#9aa1a6', '#ef5065', '#9a46cf', '#3d9df5', '#5fd3b0'];

const OfficeTile = ({ letter, rows, plate }) => (
  <Tile>
    <T>
      {rows.map(([a, b], i) => (
        <g key={i}>
          <rect x="26" y={16 + i * 16} width="27" height="16" fill={a} />
          <rect x="53" y={16 + i * 16} width="27" height="16" fill={b} />
        </g>
      ))}
      <rect x="9" y="30" width="36" height="36" rx="4" fill={plate} />
      <text x="27" y="58" textAnchor="middle" fontFamily="Inter" fontWeight="600" fontSize="27" textLength={letter === 'W' ? 26 : undefined} lengthAdjust="spacingAndGlyphs" fill="#fff">{letter}</text>
    </T>
  </Tile>
);

const Dock = () => (
  <div className="mx-auto mt-2 ml-[111px] flex h-[150px] w-[3199px] items-start rounded-[44px] border-2 border-[#8b8b8b] bg-[#707070] pl-[19px]">
    <D dot>
      <Tile>
        <T>
          <defs>
            <linearGradient id="fl" x1="0" y1="0" x2="0" y2="1"><stop offset="0" stopColor="#5cc5f6" /><stop offset="1" stopColor="#2f62ea" /></linearGradient>
            <linearGradient id="fr" x1="0" y1="0" x2="0" y2="1"><stop offset="0" stopColor="#f4f4f6" /><stop offset="1" stopColor="#cfd8e6" /></linearGradient>
          </defs>
          <rect width="96" height="96" fill="url(#fl)" />
          <path d="M53 0Q41 28 41 56h13q-1 22 6 40h36V0z" fill="url(#fr)" />
          <path d="M25 28v8M70 28v8" stroke="#1c2a44" strokeWidth="4" strokeLinecap="round" />
          <path d="M19 64q29 25 58 0" fill="none" stroke="#111" strokeWidth="3.500" strokeLinecap="round" />
        </T>
      </Tile>
    </D>
    <D>
      <Tile className="bg-[#cfd0d0]">
        <div className="grid h-full grid-cols-3 place-content-center justify-center gap-[5px] px-4">
          {launch.map((c) => (
            <svg key={c} viewBox="0 0 18 18" className="size-[18px]"><rect width="18" height="18" rx="4" fill={c} /></svg>
          ))}
        </div>
      </Tile>
    </D>
    <D dot>
      <Tile className="bg-[#f8f8f8]">
        <T>
          <circle cx="48" cy="48" r="41" fill="#4f9a55" />
          <path d="M12.500 27.500A41 41 0 0 1 83.500 27.500H48L30 58z" fill="#d74f40" />
          <path d="M83.500 27.500A41 41 0 0 1 48 89L65.500 58 48 27.500z" fill="#efbe42" />
          <path d="M12.500 27.500L30.500 58.500 48 60V27.500z" fill="#d74f40" />
          <circle cx="48" cy="48" r="20" fill="#fff" />
          <circle cx="48" cy="48" r="16.500" fill="#4a80e8" />
        </T>
      </Tile>
    </D>
    <D>
      <Tile className="bg-gradient-to-b from-white to-[#d5d5d6]">
        <T>
          <defs><linearGradient id="saf" x1="0" y1="0" x2="0" y2="1"><stop offset="0" stopColor="#4aa3ea" /><stop offset="1" stopColor="#2f68df" /></linearGradient></defs>
          <circle cx="48" cy="48" r="41" fill="url(#saf)" />
          <circle cx="48" cy="48" r="36" fill="none" stroke="#cfe3fa" strokeWidth="5" strokeDasharray="1.200 2.600" />
          <path d="M77 23L53 53 43 44z" fill="#e2554a" />
          <path d="M19 73l24-29 10 9z" fill="#f2f4f8" />
        </T>
      </Tile>
    </D>
    <D dot badge="6,143" badgeWide>
      <Tile className="bg-gradient-to-b from-[#3571ec] to-[#5fc3f7]">
        <T>
          <rect x="15" y="27" width="67" height="43" rx="4" fill="#eeeeee" />
          <path d="M16 69l23-22M81 69L58 47" stroke="#b5b5b5" strokeWidth="2" />
          <path d="M16 28l27 27q5 5 10 0l28-27" fill="#f6f6f6" stroke="#b5b5b5" strokeWidth="2" />
        </T>
      </Tile>
    </D>
    <D>
      <Tile>
        <div className="flex h-[30px] items-center justify-center bg-[#e2594f] pt-[3px] text-[20px] font-semibold tracking-[-0.4px] text-white">MAY</div>
        <div className="flex h-[66px] items-center justify-center bg-[#fafaf9] pb-1 text-[58px] leading-none font-light tracking-[-2px] text-[#262626]">26</div>
      </Tile>
    </D>
    <D dot>
      <Tile className="bg-gradient-to-b from-[#fafafa] to-[#e6e6e1]">
        <T>
          <rect width="96" height="24" fill="#f6cd4b" />
          <path d="M0 25h96" stroke="#b9a77a" strokeWidth="2" />
          <path d="M3 29h92" stroke="#b5b5b5" strokeWidth="2" strokeDasharray="2 2" />
          <path d="M0 48h96M0 72h96" stroke="#c9c9cd" strokeWidth="1.600" />
        </T>
      </Tile>
    </D>
    <D>
      <Tile className="bg-gradient-to-b from-[#58c2f6] to-[#2b5fe5]">
        <T>
          <rect x="45.500" y="40" width="5" height="42" fill="#cddcf0" />
          <rect x="33" y="78" width="30" height="5" rx="2" fill="#e4e9f0" />
          <path d="M24 14h48l4 29H20z" fill="#f2f5f9" />
          <path d="M26 38h44" stroke="#98aac6" strokeWidth="2" />
          <circle cx="48" cy="25" r="8.500" fill="#4fb6e6" />
          <path d="M48 25v-8.500a8.500 8.500 0 0 0-8.500 8.500z" fill="#c95bc0" />
          <path d="M48 25h-8.500a8.500 8.500 0 0 0 8.500 8.500z" fill="#ee9a3c" />
          <path d="M48 25h8.500a8.500 8.500 0 0 1-8.500 8.500z" fill="#62c468" />
        </T>
      </Tile>
    </D>
    <D badge="1">
      <Tile className="bg-gradient-to-b from-[#d6e0e6] to-[#8f8e8c]">
        <T>
          <circle cx="48" cy="48" r="41" fill="#222425" />
          <circle cx="48" cy="48" r="36.500" fill="none" stroke="#85888a" strokeWidth="4" />
          <circle cx="48" cy="48" r="39.500" fill="none" stroke="#85888a" strokeWidth="3" strokeDasharray="2 2.200" />
          <circle cx="48" cy="48" r="24" fill="none" stroke="#a0a3a4" strokeWidth="4" />
          <circle cx="48" cy="48" r="27.500" fill="none" stroke="#a0a3a4" strokeWidth="3" strokeDasharray="2.400 2.400" />
          <path d="M48 48h36M48 48L31 18M48 48L31 78" stroke="#b5b8ba" strokeWidth="4" />
          <circle cx="48" cy="48" r="5" fill="#505254" />
        </T>
      </Tile>
    </D>
    <D dot>
      <div className="flex size-[90px] shrink-0 items-center justify-center rounded-full bg-[#111]">
        <FaSpotify className="-m-[5px] size-[100px] shrink-0 text-[#66d36e]" />
      </div>
    </D>
    <D dot>
      <Tile>
        <T>
          <rect x="28" y="16" width="49" height="40" fill="#2b62b5" />
          <rect x="28" y="25" width="17" height="16" fill="#3476d0" />
          <rect x="45" y="25" width="16" height="16" fill="#58aaf0" />
          <rect x="61" y="25" width="16" height="16" fill="#76d2fb" />
          <rect x="45" y="41" width="16" height="16" fill="#3476d0" />
          <rect x="61" y="41" width="16" height="16" fill="#58aaf0" />
          <path d="M26 50l27 14 26-14v28q0 2-2 2H28q-2 0-2-2z" fill="#5aabeb" />
          <path d="M47 62l32 18V50z" fill="#4693dc" />
          <rect x="9" y="30" width="36" height="36" rx="4" fill="#2c6fd0" />
          <circle cx="27" cy="48" r="8.500" fill="none" stroke="#fff" strokeWidth="4" />
        </T>
      </Tile>
    </D>
    <D dot>
      <OfficeTile letter="X" plate="#2f7d44" rows={[['#4fa36c', '#66c188'], ['#3f8f58', '#4fa36c'], ['#2d5a38', '#387b48'], ['#2d5a38', '#2d5a38']]} />
    </D>
    <D dot>
      <Tile className="bg-gradient-to-b from-[#87f27f] to-[#58bd48]">
        <div className="flex size-full items-center justify-center"><FaWhatsapp className="size-[84px] text-white" /></div>
      </Tile>
    </D>
    <D dot>
      <OfficeTile letter="W" plate="#2853b4" rows={[['#5da1ea', '#5da1ea'], ['#437bd0', '#437bd0'], ['#2c58b8', '#2c58b8'], ['#1f3e8a', '#1f3e8a']]} />
    </D>
    <D>
      <svg viewBox="0 0 96 100" className="h-[100px] w-24 shrink-0">
        <path d="M3 6q0-3 3-3L75 0q4 0 4 4v12L82 14q13-2 13 2v74q0 4-4 4L22 99q-5 0-5-4V84l-8 1q-5 0-6-5z" fill="#fff" />
        <path d="M6 10q0-4 4-4l64-4q3 0 3 3v9L18 18q-3 0-3 3v58l-4 1q-4 0-4-4z" fill="#000" />
        <path d="M18 23q0-3 3-3l68-4q3 0 3 3v68q0 3-3 3l-68 5q-3 0-3-3z" fill="#000" />
        <path d="M24 38l61-4v49l-61 5z" fill="#fff" />
        <text x="54.500" y="78" textAnchor="middle" fontFamily="Liberation Serif" fontWeight="bold" fontSize="52" stroke="#000" strokeWidth="1.200" fill="#000">31</text>
      </svg>
    </D>
    <D>
      <div className="-mt-[6px] size-[112px] shrink-0 rounded-full border-[7px] border-white bg-[#944c84] p-5"><div className="size-full rounded-full bg-white" /></div>
    </D>
    <D>
      <Tile className="bg-[#c6c8c8]">
        <T>
          <defs><linearGradient id="ip" x1="0" y1="0" x2="1" y2="1"><stop offset="0" stopColor="#f2b28a" /><stop offset="0.45" stopColor="#ee8f8f" /><stop offset="1" stopColor="#4b6f86" /></linearGradient></defs>
          <rect x="28" y="6" width="40" height="83" rx="8" fill="#141a20" />
          <rect x="30" y="8" width="36" height="79" rx="6" fill="url(#ip)" />
          <path d="M66 30Q56 44 48 58 40 66 30 70v11q0 6 6 6h24q6 0 6-6z" fill="#23607c" />
          <path d="M30 70q12-8 12-20l-6-8-6 8z" fill="#f5dcd8" />
          <path d="M30 74q20 0 36-14v21q0 6-6 6H36q-6 0-6-6z" fill="#153e57" />
          <rect x="42" y="10" width="12" height="4" rx="2" fill="#000" />
        </T>
      </Tile>
    </D>
    <D mr="mr-[46px]">
      <Tile className="bg-gradient-to-b from-[#262a3c] to-[#0b0e17]">
        <T>
          <rect x="26" y="18" width="26" height="20" rx="3" fill="#ea6a33" />
          <rect x="51" y="38" width="25" height="20" rx="3" fill="#ea6a33" />
          <rect x="26" y="58" width="26" height="20" rx="3" fill="#ea6a33" />
        </T>
      </Tile>
    </D>
    <span className="mt-[18px] mr-[41px] h-[110px] w-[2px] bg-[#454545]" />
    <D>
      <svg viewBox="0 0 104 104" className="-mr-2 h-[104px] w-[104px] shrink-0">
        <rect x="2" y="2" width="94" height="96" rx="21" fill="#c3d2da" />
        <rect x="6" y="6" width="86" height="88" rx="17" fill="#f1f3f6" />
        <path d="M39 18H30q-5 3-4 18 1 29 22 29t22-29q1-15-4-18h-9" fill="none" stroke="#b8bcc0" strokeWidth="3" />
        <path d="M39 15v6M55 15v6" stroke="#111" strokeWidth="5" />
        <path d="M33 66q2 19 22 22" fill="none" stroke="#151515" strokeWidth="4" />
        <rect x="53" y="52" width="48" height="47" rx="3" fill="#a9b7be" />
        <rect x="55" y="97" width="45" height="7" fill="#35383a" />
        <circle cx="77" cy="81" r="12" fill="#d7dcdf" stroke="#7c868b" strokeWidth="1.500" />
        <path d="M67 58q0-11 9-11t10 12" fill="none" stroke="#222" strokeWidth="3" />
        <rect x="65" y="53" width="22" height="8" fill="#31373a" />
        <circle cx="77" cy="71" r="5.500" fill="#d7dcdf" stroke="#333" strokeWidth="2" />
      </svg>
    </D>
    <D dot badge="8">
      <Tile>
        <T>
          <circle cx="50" cy="27" r="10.500" fill="#7b83e0" />
          <circle cx="71" cy="30" r="7.500" fill="#4c55c0" />
          <path d="M60 40h20q3 0 3 3v17q0 10-10 10t-13-6z" fill="#5059c9" />
          <path d="M34 40h28q2 0 2 2v22q0 16-14 16T34 64z" fill="#7b83ea" />
          <rect x="13" y="30" width="36" height="36" rx="4" fill="#4951b8" />
          <text x="31" y="58" textAnchor="middle" fontFamily="Inter" fontWeight="600" fontSize="27" fill="#fff">T</text>
        </T>
      </Tile>
    </D>
    <D dot mr="mr-[46px]">
      <Tile className="bg-[#a42317]">
        <T>
          <path d="M24 76c-4-4 6-14 24-20s30-4 29 2-14 6-22-4-14-30-7-33 4 22-4 36-14 23-20 19z" fill="none" stroke="#fff" strokeWidth="5" strokeLinejoin="round" />
        </T>
      </Tile>
    </D>
    <span className="mt-[18px] mr-[49px] h-[110px] w-[2px] bg-[#454545]" />
    <div className="mt-[11px] mr-[31px] w-[82px] shrink-0">
      <div className="mx-auto h-[7px] w-[46px] rounded-t bg-[#ececec]" />
      <div className="mx-auto h-[5px] w-[74px] bg-white" />
      <div className="flex h-[101px] items-center justify-center border-[3px] border-white bg-[#fbfbfb] shadow-[inset_0_0_0_1px_#ccc]">
        <Logo className="h-[46px] w-[66px]" dot={false} width={8} />
      </div>
    </div>
    <svg viewBox="0 0 112 86" className="mt-[36px] mr-[28px] h-[86px] w-[112px] shrink-0">
      <rect width="112" height="64" fill="#fbfbf8" />
      <rect width="112" height="3" fill="#3b7a46" />
      <path d="M3 6h100M3 9h60" stroke="#a9a9a9" strokeWidth="1.500" strokeDasharray="4 2" />
      <rect y="10" width="112" height="3" fill="#f3ead0" />
      <rect x="4" y="15" width="98" height="2.500" fill="#efe84a" />
      <path d="M4 20h14M24 20h8M35 20h28M69 20h14M4 23h12M24 23h8M35 23h26M69 23h12M4 26h14M24 26h8M35 26h24M69 26h10M35 29h20" stroke="#9c9c9c" strokeWidth="1.500" />
      <path d="M0 36h112M0 46h112M0 56h112M22 32v32M44 32v32M68 32v32M90 14v50" stroke="#e3e3e3" strokeWidth="1" />
      <rect x="74" y="52" width="36" height="34" rx="8" fill="#fff" />
      <rect x="86" y="56" width="18" height="24" fill="#4fa36c" />
      <rect x="86" y="68" width="18" height="12" fill="#2d6a3e" />
      <rect x="77" y="61" width="15" height="14" rx="2" fill="#2f7d44" />
      <path d="M81 64l7 8M88 64l-7 8" stroke="#fff" strokeWidth="2" />
    </svg>
    <svg viewBox="0 0 88 112" className="mt-[10px] h-[112px] w-[88px] shrink-0">
      <defs><linearGradient id="tr" x1="0" x2="1"><stop offset="0" stopColor="#c7c7c7" /><stop offset=".4" stopColor="#e3e3e3" /><stop offset="1" stopColor="#bdbdbd" /></linearGradient></defs>
      <path d="M2 18h84l-10 84q-2 9-32 9t-32-9z" fill="url(#tr)" />
      <ellipse cx="44" cy="18" rx="42" ry="10" fill="#8c8c8c" stroke="#d9d9d9" strokeWidth="2" />
      <path d="M8 12l10-8 8 6 4-10 12 8 8-6 10 8 14-2 4 12-16 8-10-4-10 6-12-4-10 4z" fill="#e9e9e9" />
      <path d="M28 14l8-3 4 6-9 4zM50 10l8 4-4 7-8-4zM18 10l5 8-8 2z" fill="#5c4a44" />
      <path d="M33 15l7-2 2 5-7 3z" fill="#4fb4d8" />
      <path d="M62 10l9 3-5 8z" fill="#7d7d7d" />
      <path d="M24 40q12 10 28-6M20 70q20-12 40 4M30 96q10-14 34-8" fill="none" stroke="#f1f1f1" strokeWidth="4" opacity=".6" />
    </svg>
  </div>
);

export default function App() {
  return (
    <div className="flex h-[2214px] w-[3420px] flex-col overflow-hidden bg-[linear-gradient(180deg,#282828_0%,#282828_50%,#1e1e1e_92.500%,#2f2f2f_100%)] font-['Inter',sans-serif]">
      <MenuBar />
      <div className="flex h-[1968px] shrink-0 flex-col overflow-hidden rounded-[22px] bg-[#d2e9c3] shadow-[inset_0_2px_0_#e9f4e1]">
        <TabStrip />
        <div className="flex h-[162px] shrink-0 flex-col rounded-t-[20px] border-b-[3px] border-[#cbcbcd] bg-white">
          <Toolbar />
          <Bookmarks />
        </div>
        <Page />
      </div>
      <Dock />
    </div>
  );
}
